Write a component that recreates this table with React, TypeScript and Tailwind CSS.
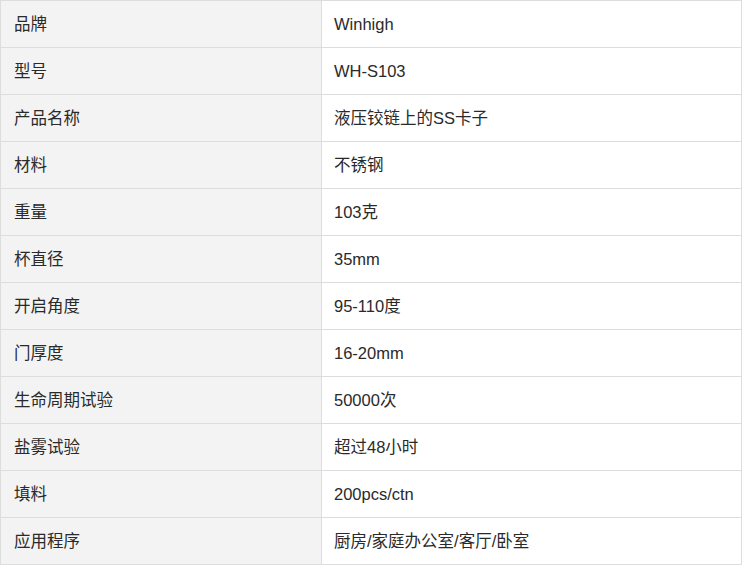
import React from 'react';

const rows: [string, string][] = [
  ['品牌', 'Winhigh'],
  ['型号', 'WH-S103'],
  ['产品名称', '液压铰链上的SS卡子'],
  ['材料', '不锈钢'],
  ['重量', '103克'],
  ['杯直径', '35mm'],
  ['开启角度', '95-110度'],
  ['门厚度', '16-20mm'],
  ['生命周期试验', '50000次'],
  ['盐雾试验', '超过48小时'],
  ['填料', '200pcs/ctn'],
  ['应用程序', '厨房/家庭办公室/客厅/卧室'],
];

export default function App() {
  return (
    <div className="bg-white w-[748px] h-[569px]" style={{ fontFamily: '"Liberation Sans", "Noto Sans CJK SC", sans-serif' }}>
      <table className="w-[742px] border-collapse text-[16.5px] text-[#2a2a2a]">
        <tbody>
          {rows.map(([label, value]) => (
            <tr key={label} className="h-[47px]">
              <td className="w-[321px] border border-[#ddd] bg-[#f3f3f3] pl-[13px] py-0 align-middle">{label}</td>
              <td className="border border-[#ddd] pl-[12px] py-0 align-middle">{value}</td>
            </tr>
          ))}
        </tbody>
      </table>
    </div>
  );
}
